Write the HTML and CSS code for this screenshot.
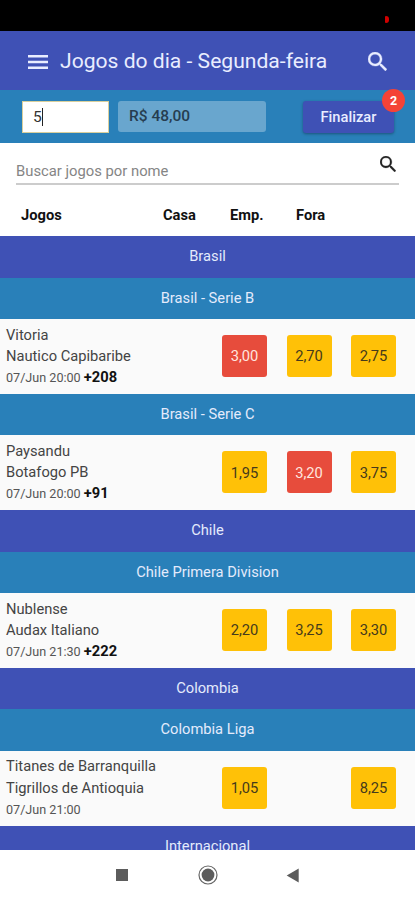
FILE: index.html
```html
<!DOCTYPE html>
<html lang="pt-BR">
<head>
  <meta charset="UTF-8" />
  <meta name="viewport" content="width=device-width, initial-scale=1.0"/>
  <title>Jogos do dia</title>
  <link rel="stylesheet" href="styles.css">
</head>
<body>

  <div class="status-bar"><span class="rec"></span></div>

  <header class="app-bar">
    <svg class="menu-icon" viewBox="0 0 20 14"><path d="M0 1.3h20M0 7h20M0 12.7h20" stroke="currentColor" stroke-width="2.6"/></svg>
    <h1>Jogos do dia - Segunda-feira</h1>
    <svg class="search-icon" viewBox="3 3 17.5 17.5"><path fill="currentColor" stroke="currentColor" stroke-width=".3" d="M15.5 14h-.79l-.28-.27A6.47 6.47 0 0 0 16 9.5 6.5 6.5 0 1 0 9.5 16c1.61 0 3.09-.59 4.23-1.57l.27.28v.79l5 4.99L20.49 19l-4.99-5zm-6 0a4.5 4.5 0 1 1 0-9 4.5 4.5 0 0 1 0 9z"/></svg>
  </header>

  <div class="bet-bar">
    <div class="stake"><span>5</span><i class="caret"></i></div>
    <div class="prize">R$ 48,00</div>
    <button class="finish">Finalizar<span class="badge">2</span></button>
  </div>

  <div class="search">
    <span>Buscar jogos por nome</span>
    <svg viewBox="3 3 17.5 17.5"><path fill="currentColor" stroke="currentColor" stroke-width=".3" d="M15.5 14h-.79l-.28-.27A6.47 6.47 0 0 0 16 9.5 6.5 6.5 0 1 0 9.5 16c1.61 0 3.09-.59 4.23-1.57l.27.28v.79l5 4.99L20.49 19l-4.99-5zm-6 0a4.5 4.5 0 1 1 0-9 4.5 4.5 0 0 1 0 9z"/></svg>
  </div>

  <div class="columns">
    <span>Jogos</span>
    <span>Casa</span>
    <span>Emp.</span>
    <span>Fora</span>
  </div>

  <main class="games">
    <div class="country">Brasil</div>
    <div class="league">Brasil - Serie B</div>
    <div class="game">
      <div class="teams">
        <div>Vitoria</div>
        <div>Nautico Capibaribe</div>
        <div class="date">07/Jun 20:00 <b>+208</b></div>
      </div>
      <button class="odd selected">3,00</button>
      <button class="odd">2,70</button>
      <button class="odd">2,75</button>
    </div>

    <div class="league">Brasil - Serie C</div>
    <div class="game">
      <div class="teams">
        <div>Paysandu</div>
        <div>Botafogo PB</div>
        <div class="date">07/Jun 20:00 <b>+91</b></div>
      </div>
      <button class="odd">1,95</button>
      <button class="odd selected">3,20</button>
      <button class="odd">3,75</button>
    </div>

    <div class="country">Chile</div>
    <div class="league">Chile Primera Division</div>
    <div class="game">
      <div class="teams">
        <div>Nublense</div>
        <div>Audax Italiano</div>
        <div class="date">07/Jun 21:30 <b>+222</b></div>
      </div>
      <button class="odd">2,20</button>
      <button class="odd">3,25</button>
      <button class="odd">3,30</button>
    </div>

    <div class="country">Colombia</div>
    <div class="league">Colombia Liga</div>
    <div class="game">
      <div class="teams">
        <div>Titanes de Barranquilla</div>
        <div>Tigrillos de Antioquia</div>
        <div class="date">07/Jun 21:00</div>
      </div>
      <button class="odd">1,05</button>
      <span></span>
      <button class="odd">8,25</button>
    </div>

    <div class="country">Internacional</div>
  </main>

  <nav class="nav-bar">
    <svg viewBox="0 0 20 20"><path fill="#5c5c5c" d="M4 4h12v12H4z"/></svg>
    <svg viewBox="0 0 20 20"><circle cx="10" cy="10" r="9" fill="none" stroke="#666" stroke-width="1.2"/><circle cx="10" cy="10" r="6.4" fill="#5c5c5c"/></svg>
    <svg viewBox="0 0 20 20"><path fill="#5c5c5c" d="M14.7 3.5v14L2.7 10.5z"/></svg>
  </nav>

</body>
</html>
```
FILE: styles.css
```css
* {
  box-sizing: border-box;
}

body {
  margin: 0;
  height: 900px;
  display: flex;
  flex-direction: column;
  overflow: hidden;
  background: #fff;
  font-family: Roboto, sans-serif;
  font-size: 14.7px;
}

button {
  border: none;
  padding: 0;
  font-family: inherit;
}

.status-bar {
  flex: 0 0 31px;
  display: flex;
  justify-content: flex-end;
  padding: 16px 26px 0 0;
  background: #000;
}

.rec {
  width: 4px;
  height: 7px;
  border-radius: 1px 3px 3px 1px;
  background: #d00000;
}

.app-bar {
  flex: 0 0 59px;
  display: flex;
  align-items: center;
  padding: 0 28px;
  background: #3f51b5;
  color: #e9edff;
}

.menu-icon {
  width: 20px;
  height: 14px;
  margin-top: 2px;
}

.app-bar h1 {
  flex: 1;
  margin: 0 0 0 12px;
  font-size: 21.1px;
  font-weight: 400;
  white-space: nowrap;
}

.search-icon {
  width: 19px;
  height: 19px;
  margin-top: 2px;
}

.bet-bar {
  flex: 0 0 53px;
  display: flex;
  align-items: center;
  padding: 0 21px 0 22px;
  background: #2980b9;
}

.stake {
  width: 87px;
  height: 32px;
  display: flex;
  align-items: center;
  padding-left: 10px;
  border: 1px solid #d9cf9c;
  background: #fff;
  color: #333;
  font-size: 15.5px;
}

.caret {
  width: 1px;
  height: 18px;
  background: #222;
}

.prize {
  width: 148px;
  height: 31px;
  margin-left: 9px;
  padding-left: 11px;
  border-radius: 3px;
  background: #69a6ce;
  color: #263d50;
  font-size: 15.5px;
  font-weight: 500;
  line-height: 31px;
}

.finish {
  position: relative;
  width: 91px;
  height: 32px;
  margin-left: auto;
  border-radius: 3px;
  background: #3f51b5;
  box-shadow: 0 1px 3px rgba(0,0,0,0.35);
  color: #e9edff;
  font-size: 14.7px;
  font-weight: 500;
}

.badge {
  position: absolute;
  top: -12px;
  right: -11px;
  width: 23px;
  height: 23px;
  border-radius: 50%;
  background: #f44336;
  color: #fff;
  font-size: 12.5px;
  font-weight: 700;
  line-height: 23px;
}

.search {
  flex: 0 0 32px;
  display: flex;
  align-items: center;
  justify-content: space-between;
  margin: 10px 16px 0;
  border-bottom: 2px solid #ccc;
  color: #858585;
}

.search span {
  margin-top: 5px;
  font-size: 14.8px;
}

.search svg {
  width: 16px;
  height: 16px;
  margin: 0 3px 8px 0;
  color: #222;
}

.columns {
  flex: 0 0 51px;
  display: grid;
  grid-template-columns: 142px 67px 66px 1fr;
  padding: 9px 0 0 21px;
  align-items: center;
  color: #111;
  font-weight: 700;
  line-height: 20px;
}

.games {
  flex: 1;
  overflow: hidden;
}

.country,
.league {
  height: 41.6px;
  background: #3f51b5;
  color: #e4ebfc;
  line-height: 41.6px;
  text-align: center;
}

.league {
  background: #2980b9;
}

.game {
  height: 74.6px;
  display: grid;
  grid-template-columns: 1fr 45px 45px 45px;
  column-gap: 19.5px;
  align-items: center;
  padding: 0 19px 0 6px;
  background: #fafafa;
}

.teams {
  color: #444;
  line-height: 21.3px;
  white-space: nowrap;
}

.date {
  color: #555;
  font-size: 12.6px;
}

.date b {
  color: #111;
  font-size: 14.7px;
}

.odd {
  height: 42px;
  margin-top: -1px;
  padding-top: 1px;
  border-radius: 3px;
  background: #ffc107;
  color: #453a1c;
  font-size: 14.7px;
}

.odd.selected {
  background: #e74c3c;
  color: #ffe5df;
}

.nav-bar {
  flex: 0 0 50px;
  display: flex;
  justify-content: center;
  gap: 66px;
  padding-top: 15px;
  background: #fff;
}

.nav-bar svg {
  width: 20px;
  height: 20px;
}
```
